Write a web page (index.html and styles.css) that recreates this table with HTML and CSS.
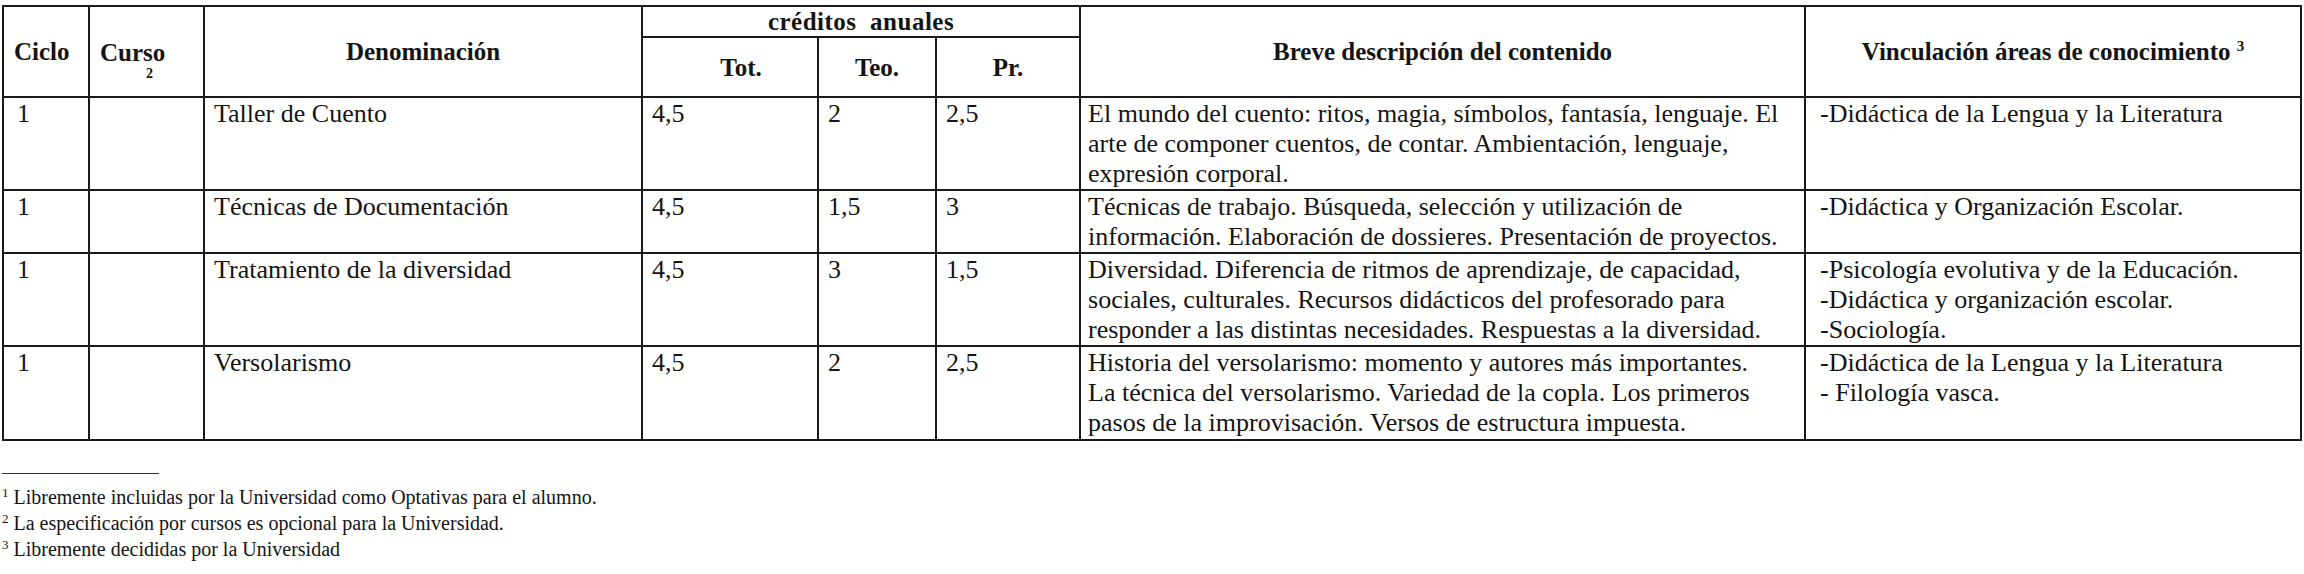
FILE: index.html
```html
<!DOCTYPE html>
<html lang="es">
<head>
<meta charset="utf-8">
<title>Optativas</title>
<link rel="stylesheet" href="styles.css">
</head>
<body>
<table class="grid">
  <colgroup>
    <col class="c-ciclo"><col class="c-curso"><col class="c-den"><col class="c-tot"><col class="c-teo"><col class="c-pr"><col class="c-desc"><col class="c-vinc">
  </colgroup>
  <thead>
    <tr class="h-top">
      <th rowspan="2" class="h-ciclo">Ciclo</th>
      <th rowspan="2" class="h-curso"><span class="curso-word">Curso</span><span class="curso-note">2</span></th>
      <th rowspan="2" class="h-center">Denominación</th>
      <th colspan="3" class="h-cred">créditos&nbsp; anuales</th>
      <th rowspan="2" class="h-center">Breve descripción del contenido</th>
      <th rowspan="2" class="h-center">Vinculación áreas de conocimiento <sup class="hsup">3</sup></th>
    </tr>
    <tr class="h-sub">
      <th class="h-tot">Tot.</th>
      <th class="h-teo">Teo.</th>
      <th class="h-pr">Pr.</th>
    </tr>
  </thead>
  <tbody>
    <tr class="r1">
      <td class="d-ciclo">1</td><td></td><td>Taller de Cuento</td><td>4,5</td><td>2</td><td>2,5</td>
      <td class="d-desc">El mundo del cuento: ritos, magia, símbolos, fantasía, lenguaje. El<br>arte de componer cuentos, de contar. Ambientación, lenguaje,<br>expresión corporal.</td>
      <td class="d-vinc">-Didáctica de la Lengua y la Literatura</td>
    </tr>
    <tr class="r2">
      <td class="d-ciclo">1</td><td></td><td>Técnicas de Documentación</td><td>4,5</td><td>1,5</td><td>3</td>
      <td class="d-desc">Técnicas de trabajo. Búsqueda, selección y utilización de<br>información. Elaboración de dossieres. Presentación de proyectos.</td>
      <td class="d-vinc">-Didáctica y Organización Escolar.</td>
    </tr>
    <tr class="r3">
      <td class="d-ciclo">1</td><td></td><td>Tratamiento de la diversidad</td><td>4,5</td><td>3</td><td>1,5</td>
      <td class="d-desc">Diversidad. Diferencia de ritmos de aprendizaje, de capacidad,<br>sociales, culturales. Recursos didácticos del profesorado para<br>responder a las distintas necesidades. Respuestas a la diversidad.</td>
      <td class="d-vinc">-Psicología evolutiva y de la Educación.<br>-Didáctica y organización escolar.<br>-Sociología.</td>
    </tr>
    <tr class="r4">
      <td class="d-ciclo">1</td><td></td><td>Versolarismo</td><td>4,5</td><td>2</td><td>2,5</td>
      <td class="d-desc">Historia del versolarismo: momento y autores más importantes.<br>La técnica del versolarismo. Variedad de la copla. Los primeros<br>pasos de la improvisación. Versos de estructura impuesta.</td>
      <td class="d-vinc">-Didáctica de la Lengua y la Literatura<br>- Filología vasca.</td>
    </tr>
  </tbody>
</table>

<div class="notes">
  <div class="note-rule"></div>
  <p class="note"><sup class="nsup">1</sup> Libremente incluidas por la Universidad como Optativas para el alumno.</p>
  <p class="note"><sup class="nsup">2</sup> La especificación por cursos es opcional para la Universidad.</p>
  <p class="note"><sup class="nsup">3</sup> Libremente decididas por la Universidad</p>
</div>
</body>
</html>
```

FILE: styles.css
```css
html, body {
  margin: 0;
  padding: 0;
  background: #ffffff;
}

body {
  font-family: "Liberation Serif", "Times New Roman", serif;
  color: #141414;
}

.grid {
  border-collapse: collapse;
  table-layout: fixed;
  width: 2298px;
  margin: 5px 0 0 2px;
}

.c-ciclo { width: 86px; }
.c-curso { width: 115px; }
.c-den { width: 438px; }
.c-tot { width: 176px; }
.c-teo { width: 118px; }
.c-pr { width: 144px; }
.c-desc { width: 725px; }
.c-vinc { width: 496px; }

.grid th,
.grid td {
  border: 2px solid #1a1a1a;
  padding: 0;
}

.grid th {
  font-weight: bold;
  font-size: 25px;
  line-height: 29px;
  vertical-align: middle;
  text-align: center;
}

.h-top { height: 31px; }
.h-sub { height: 60px; }

.grid th.h-ciclo {
  text-align: left;
  padding-left: 10px;
}

.grid th.h-curso {
  text-align: left;
  vertical-align: top;
  padding: 31px 0 0 10px;
}

.curso-word {
  display: block;
}

.curso-note {
  display: block;
  font-size: 14px;
  line-height: 14px;
  padding-left: 46px;
}

.h-cred {
  letter-spacing: 0.5px;
}

.grid th.h-tot { padding-left: 22px; }

.hsup {
  font-size: 15px;
  vertical-align: 9px;
  line-height: 0;
}

.grid td {
  font-size: 26px;
  line-height: 30px;
  vertical-align: top;
  padding: 1px 8px 0 9px;
  white-space: nowrap;
}

.grid td.d-ciclo {
  padding-left: 13px;
}

.grid td.d-desc {
  padding-left: 7px;
}

.grid td.d-vinc {
  padding-left: 14px;
}

.r1 { height: 93px; }
.r2 { height: 63px; }
.r3 { height: 92px; }
.r4 { height: 94px; }

.notes {
  margin-top: 32px;
  padding-left: 2px;
}

.note-rule {
  width: 157px;
  height: 0;
  border-top: 1px solid #333;
  margin-bottom: 10px;
}

.note {
  margin: 0;
  font-size: 20px;
  line-height: 26px;
  white-space: nowrap;
}

.nsup {
  font-size: 13px;
  vertical-align: 7px;
  line-height: 0;
}
```
